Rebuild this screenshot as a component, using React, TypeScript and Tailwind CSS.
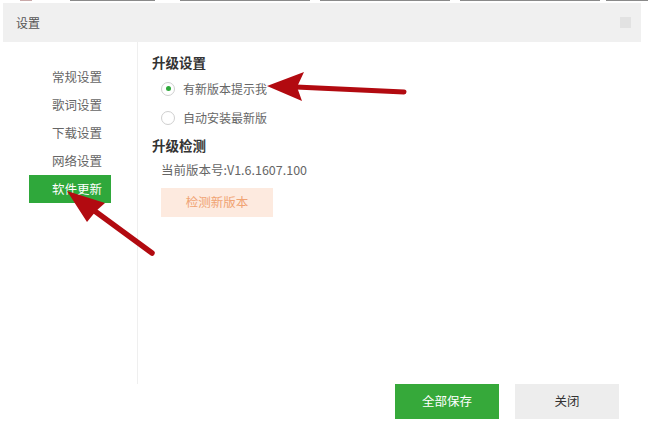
import React from 'react';

const font = { fontFamily: '"Noto Sans CJK SC", "Noto Sans", sans-serif' };

const navItems = ['常规设置', '歌词设置', '下载设置', '网络设置', '软件更新'];

const Radio: React.FC<{ checked?: boolean; label: string }> = ({ checked, label }) => (
  <div className="flex items-center h-[29px] pl-[9px]">
    <span className="w-[14px] h-[14px] rounded-full border border-[#cfcfcf] bg-white flex items-center justify-center">
      {checked && <span className="w-[5px] h-[5px] rounded-full bg-[#2ea83a]" />}
    </span>
    <span className="ml-[8px] text-[12px] text-[#666]">{label}</span>
  </div>
);

export default function App() {
  return (
    <div className="relative w-[649px] h-[435px] bg-white overflow-hidden" style={font}>
      {/* top edge of the cropped window behind */}
      <div className="h-[3px] flex items-start">
        <div className="ml-[20px] w-[12px] h-[1px] bg-[#c9a9a9]" />
        <div className="ml-[38px] w-[85px] h-[1px] bg-[#8a8a8a]" />
        <div className="ml-[25px] w-[130px] h-[1px] bg-[#8a8a8a]" />
        <div className="ml-[10px] w-[130px] h-[1px] bg-[#8a8a8a]" />
        <div className="ml-[10px] w-[140px] h-[1px] bg-[#8a8a8a]" />
        <div className="ml-[6px] w-[42px] h-[1px] bg-[#8a8a8a]" />
      </div>

      {/* Title bar */}
      <div className="ml-[3px] mr-[8px] h-[39px] bg-[#f0f0f0] flex items-center justify-between pl-[13px] pr-[10px]">
        <span className="text-[12px] text-[#555]">设置</span>
        <span className="w-[11px] h-[11px] bg-[#e2e2e2]" />
      </div>

      {/* Body */}
      <div className="flex h-[342px]">
        <div className="w-[138px] border-r border-[#efefef] pt-[21px]">
          {navItems.map((item, i) => (
            <div
              key={item}
              className={
                i === navItems.length - 1
                  ? 'ml-[29px] w-[82px] h-[28px] pl-[23px] flex items-center text-[12.5px] text-white bg-[#2fa83b]'
                  : 'ml-[29px] w-[82px] h-[28px] pl-[23px] flex items-center text-[12.5px] text-[#666]'
              }
            >
              {item}
            </div>
          ))}
        </div>

        <div className="flex-1 pl-[14px] pt-[9px]">
          <div className="text-[13.5px] font-bold text-[#333] h-[22px] flex items-center">升级设置</div>
          <div className="mt-[1px]">
            <Radio checked label="有新版本提示我" />
            <Radio label="自动安装最新版" />
          </div>
          <div className="mt-[2px] text-[13.5px] font-bold text-[#333] h-[22px] flex items-center">升级检测</div>
          <div className="pl-[9px] mt-[3px] text-[12.5px] text-[#666] h-[22px] flex items-center">当前版本号:V1.6.1607.100</div>
          <button className="ml-[9px] mt-[7px] w-[112px] h-[29px] bg-[#fdeadf] text-[#f0a373] text-[12.5px]">
            检测新版本
          </button>
        </div>
      </div>

      {/* Footer */}
      <div className="flex justify-end gap-[16px] pr-[30px]">
        <button className="w-[104px] h-[35px] bg-[#36a93a] text-white text-[12.5px]">全部保存</button>
        <button className="w-[104px] h-[35px] bg-[#ededed] text-[#333] text-[12.5px]">关闭</button>
      </div>

      {/* Annotation arrows */}
      <svg className="absolute inset-0 pointer-events-none" width="649" height="435">
        <line x1="296" y1="87" x2="404" y2="92" stroke="#b20a10" strokeWidth="5" strokeLinecap="round" />
        <polygon points="267,86 304,72 297,87 302,101" fill="#b20a10" />
        <line x1="92" y1="209" x2="152" y2="253" stroke="#b20a10" strokeWidth="5.5" strokeLinecap="round" />
        <polygon points="67,191 105,203 96,211 87,222" fill="#b20a10" />
      </svg>
    </div>
  );
}
